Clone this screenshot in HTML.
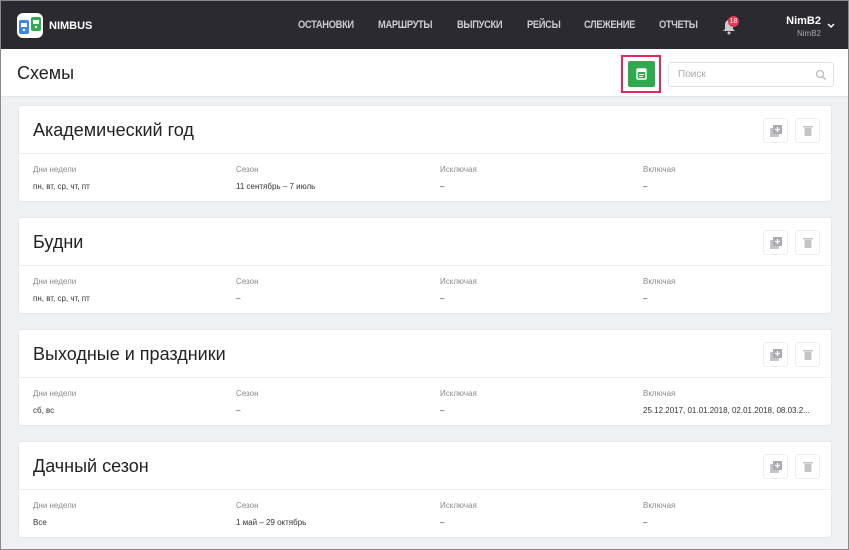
<!DOCTYPE html>
<html><head><meta charset="utf-8"><style>
*{margin:0;padding:0;box-sizing:border-box}
body{width:849px;height:550px;overflow:hidden;background:#eef0f3;font-family:"Liberation Sans","DejaVu Sans",sans-serif;position:relative;border:1px solid #8a8a8a;border-top:1px solid #8a8a8a}
.hdr{position:absolute;left:0;top:0;width:847px;height:48px;background:#2b2a30}
.logo{position:absolute;left:16px;top:12px;width:26px;height:25px;background:#fff;border-radius:6px;overflow:hidden}
.brand{position:absolute;left:48px;top:19px;color:#fff;font-weight:bold;font-size:11px}
.nav{position:absolute;top:18px;color:#c9cbd0;font-size:11px;letter-spacing:-0.4px;font-weight:bold;transform:scaleX(.85);transform-origin:left}
.sub{position:absolute;left:0;top:48px;width:847px;height:48px;background:#fff;border-bottom:1px solid #e3e5e8}
.title{position:absolute;left:17px;top:62px;font-size:18px;color:#222}
.card{position:absolute;left:17px;width:814px;height:97px;background:#fff;border:1px solid #e6e8eb;border-radius:3px}
.card h2{position:absolute;left:14px;top:14px;font-size:18px;font-weight:normal;color:#222}
.card .div{position:absolute;left:0;right:0;top:47px;border-top:1px solid #eceef0}
.btn{position:absolute;top:12px;width:25px;height:25px;border:1px solid #eceef0;border-radius:3px}
.lab{position:absolute;top:59px;font-size:8px;color:#8a8a8a}
.val{position:absolute;top:76px;font-size:8px;color:#333}
</style></head><body>
<div class="hdr">
 <div class="logo"><svg width="26" height="25"><rect x="2" y="7" width="10" height="14" rx="2" fill="#3d83e8"/><rect x="14" y="4" width="10" height="14" rx="2" fill="#2fad4f"/><rect x="4" y="10" width="6" height="4" fill="#fff"/><rect x="16" y="7" width="6" height="4" fill="#fff"/><circle cx="7" cy="17" r="1.2" fill="#fff"/><circle cx="19" cy="14" r="1.2" fill="#fff"/></svg></div>
 <div class="brand">NIMBUS</div>
 <div class="nav" style="left:297px">ОСТАНОВКИ</div>
 <div class="nav" style="left:377px">МАРШРУТЫ</div>
 <div class="nav" style="left:456px">ВЫПУСКИ</div>
 <div class="nav" style="left:526px">РЕЙСЫ</div>
 <div class="nav" style="left:583px">СЛЕЖЕНИЕ</div>
 <div class="nav" style="left:658px">ОТЧЕТЫ</div>
 <svg style="position:absolute;left:721px;top:18px" width="14" height="16"><path d="M7 1C4 1 3 4 3 6v4l-2 2h12l-2-2V6c0-2-1-5-4-5z" fill="#c9cbd0"/><circle cx="7" cy="14" r="1.5" fill="#c9cbd0"/></svg>
 <div style="position:absolute;left:727px;top:15px;width:11px;height:11px;border-radius:6px;background:#e8394f;color:#fff;font-size:7px;text-align:center;line-height:11px">18</div>
 <div style="position:absolute;right:27px;top:14px;color:#fff;font-weight:bold;font-size:11px">NimB2</div>
 <div style="position:absolute;right:27px;top:28px;color:#aaa;font-size:8px">NimB2</div>
 <svg style="position:absolute;left:826px;top:22px" width="8" height="6"><path d="M1 1l3 3 3-3" stroke="#fff" stroke-width="1.5" fill="none"/></svg>
</div>
<div class="sub">
 <div class="title" style="top:14px;left:16px">Схемы</div>
 <div style="position:absolute;left:620px;top:6px;width:40px;height:38px;border:2px solid #e8245c"></div>
 <div style="position:absolute;left:627px;top:12px;width:27px;height:26px;background:#2fa94e;border-radius:2px"><svg style="position:absolute;left:8px;top:6px" width="11" height="13"><rect x="1" y="2" width="9" height="10" rx="1" fill="none" stroke="#fff" stroke-width="1.4"/><rect x="1" y="2" width="9" height="3" fill="#fff"/><rect x="3" y="7" width="5" height="1" fill="#fff"/><rect x="3" y="9" width="4" height="1" fill="#fff"/></svg></div>
 <div style="position:absolute;left:667px;top:13px;width:166px;height:25px;border:1px solid #dfe1e4;border-radius:3px"><span style="position:absolute;left:9px;top:6px;font-size:10px;color:#aaa">Поиск</span><svg style="position:absolute;right:6px;top:6px" width="12" height="12"><circle cx="5" cy="5" r="3.5" stroke="#bbb" stroke-width="1.3" fill="none"/><path d="M7.5 7.5l3 3" stroke="#bbb" stroke-width="1.5"/></svg></div>
</div>

<!-- cards -->
<div class="card" style="top:104px"><h2>Академический год</h2><div class="div"></div>
 <div class="btn" style="left:744px"><svg style="position:absolute;left:5px;top:5px" width="14" height="14"><rect x="1" y="4" width="9" height="9" fill="#c2c4c7"/><rect x="4" y="1" width="9" height="9" fill="#a9abae"/><path d="M8.5 3v5M6 5.5h5" stroke="#fff" stroke-width="1.3"/></svg></div>
 <div class="btn" style="left:776px"><svg style="position:absolute;left:7px;top:6px" width="10" height="12"><rect x="0" y="1" width="10" height="1.5" fill="#c2c4c7"/><rect x="1.5" y="3" width="7" height="8" fill="#c2c4c7"/></svg></div>
 <div class="lab" style="left:14px">Дни недели</div><div class="val" style="left:14px">пн, вт, ср, чт, пт</div>
 <div class="lab" style="left:217px">Сезон</div><div class="val" style="left:217px">11 сентябрь – 7 июль</div>
 <div class="lab" style="left:421px">Исключая</div><div class="val" style="left:421px">–</div>
 <div class="lab" style="left:624px">Включая</div><div class="val" style="left:624px">–</div>
</div>
<div class="card" style="top:216px"><h2>Будни</h2><div class="div"></div>
 <div class="btn" style="left:744px"><svg style="position:absolute;left:5px;top:5px" width="14" height="14"><rect x="1" y="4" width="9" height="9" fill="#c2c4c7"/><rect x="4" y="1" width="9" height="9" fill="#a9abae"/><path d="M8.5 3v5M6 5.5h5" stroke="#fff" stroke-width="1.3"/></svg></div>
 <div class="btn" style="left:776px"><svg style="position:absolute;left:7px;top:6px" width="10" height="12"><rect x="0" y="1" width="10" height="1.5" fill="#c2c4c7"/><rect x="1.5" y="3" width="7" height="8" fill="#c2c4c7"/></svg></div>
 <div class="lab" style="left:14px">Дни недели</div><div class="val" style="left:14px">пн, вт, ср, чт, пт</div>
 <div class="lab" style="left:217px">Сезон</div><div class="val" style="left:217px">–</div>
 <div class="lab" style="left:421px">Исключая</div><div class="val" style="left:421px">–</div>
 <div class="lab" style="left:624px">Включая</div><div class="val" style="left:624px">–</div>
</div>
<div class="card" style="top:328px"><h2>Выходные и праздники</h2><div class="div"></div>
 <div class="btn" style="left:744px"><svg style="position:absolute;left:5px;top:5px" width="14" height="14"><rect x="1" y="4" width="9" height="9" fill="#c2c4c7"/><rect x="4" y="1" width="9" height="9" fill="#a9abae"/><path d="M8.5 3v5M6 5.5h5" stroke="#fff" stroke-width="1.3"/></svg></div>
 <div class="btn" style="left:776px"><svg style="position:absolute;left:7px;top:6px" width="10" height="12"><rect x="0" y="1" width="10" height="1.5" fill="#c2c4c7"/><rect x="1.5" y="3" width="7" height="8" fill="#c2c4c7"/></svg></div>
 <div class="lab" style="left:14px">Дни недели</div><div class="val" style="left:14px">сб, вс</div>
 <div class="lab" style="left:217px">Сезон</div><div class="val" style="left:217px">–</div>
 <div class="lab" style="left:421px">Исключая</div><div class="val" style="left:421px">–</div>
 <div class="lab" style="left:624px">Включая</div><div class="val" style="left:624px">25.12.2017, 01.01.2018, 02.01.2018, 08.03.2...</div>
</div>
<div class="card" style="top:440px"><h2>Дачный сезон</h2><div class="div"></div>
 <div class="btn" style="left:744px"><svg style="position:absolute;left:5px;top:5px" width="14" height="14"><rect x="1" y="4" width="9" height="9" fill="#c2c4c7"/><rect x="4" y="1" width="9" height="9" fill="#a9abae"/><path d="M8.5 3v5M6 5.5h5" stroke="#fff" stroke-width="1.3"/></svg></div>
 <div class="btn" style="left:776px"><svg style="position:absolute;left:7px;top:6px" width="10" height="12"><rect x="0" y="1" width="10" height="1.5" fill="#c2c4c7"/><rect x="1.5" y="3" width="7" height="8" fill="#c2c4c7"/></svg></div>
 <div class="lab" style="left:14px">Дни недели</div><div class="val" style="left:14px">Все</div>
 <div class="lab" style="left:217px">Сезон</div><div class="val" style="left:217px">1 май – 29 октябрь</div>
 <div class="lab" style="left:421px">Исключая</div><div class="val" style="left:421px">–</div>
 <div class="lab" style="left:624px">Включая</div><div class="val" style="left:624px">–</div>
</div>
</body></html>
